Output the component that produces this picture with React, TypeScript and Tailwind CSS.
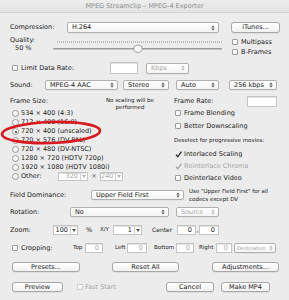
import React from "react";

function Stepper({ color = "#444" }: { color?: string }) {
  return (
    <svg width="4" height="6" viewBox="0 0 4 6" className="shrink-0">
      <path d="M0.3 2.4 L2 0.6 L3.7 2.4 Z" fill={color} />
      <path d="M0.3 3.6 L2 5.4 L3.7 3.6 Z" fill={color} />
    </svg>
  );
}

function Popup({ label, className, disabled = false }: { label: string; className: string; disabled?: boolean }) {
  return (
    <div
      className={`${className} flex shrink-0 items-center justify-between rounded-[2px] border border-[#b0b0b0] bg-gradient-to-b from-white to-[#f4f4f4] pr-[3px] shadow-[0_0.5px_0_rgba(0,0,0,0.08)] ${disabled ? "text-[#a9a9a9]" : "text-[#222]"}`}
    >
      <span className="truncate">{label}</span>
      <Stepper color={disabled ? "#b5b5b5" : "#555"} />
    </div>
  );
}

function Field({ value = "", className, dim = false }: { value?: string; className: string; dim?: boolean }) {
  return (
    <div
      className={`${className} flex shrink-0 items-center justify-end border border-[#c4c4c4] bg-white pr-[3px] shadow-[inset_0_1px_0_#e2e2e2] ${dim ? "text-[#a8a8a8]" : "text-[#222]"}`}
    >
      {value}
    </div>
  );
}

function Combo({ value, className, dim = false }: { value: string; className: string; dim?: boolean }) {
  return (
    <div className={`${className} flex h-[10px] shrink-0 items-stretch border border-[#c4c4c4] bg-white shadow-[inset_0_1px_0_#e2e2e2]`}>
      <div className={`flex flex-1 items-center justify-end pr-[2px] ${dim ? "text-[#a8a8a8]" : "text-[#222]"}`}>{value}</div>
      <div className="flex w-[7px] items-center justify-center border-l border-[#d0d0d0]">
        <svg width="4" height="3" viewBox="0 0 4 3">
          <path d="M0 0 L4 0 L2 3 Z" fill={dim ? "#b0b0b0" : "#555"} />
        </svg>
      </div>
    </div>
  );
}

function Check({ checked = false, disabled = false, className = "" }: { checked?: boolean; disabled?: boolean; className?: string }) {
  if (checked) {
    return (
      <svg width="7" height="7" viewBox="0 0 7 7" className={`${className} shrink-0`}>
        <path d="M1 3.8 L2.8 5.8 L6.4 0.6" fill="none" stroke={disabled ? "#a5a5a5" : "#2a2a2a"} strokeWidth="1.3" />
      </svg>
    );
  }
  return (
    <div
      className={`${className} h-[6px] w-[6px] shrink-0 rounded-[1px] border ${disabled ? "border-[#cfcfcf]" : "border-[#9c9c9c]"} bg-gradient-to-b from-white to-[#f1f1f1]`}
    />
  );
}

function Radio({ checked = false }: { checked?: boolean }) {
  return (
    <div className="ml-[12px] flex h-[7px] w-[7px] shrink-0 items-center justify-center rounded-full border border-[#9a9a9a] bg-gradient-to-b from-white to-[#efefef]">
      {checked ? <div className="h-[2px] w-[2px] rounded-full bg-[#333]" /> : null}
    </div>
  );
}

function Btn({ label, className }: { label: string; className: string }) {
  return (
    <div
      className={`${className} flex h-[10px] shrink-0 items-center justify-center rounded-[3px] border border-[#a8a8a8] bg-gradient-to-b from-white to-[#f1f1f1] text-[#222] shadow-[0_0.5px_0_rgba(0,0,0,0.12)]`}
    >
      {label}
    </div>
  );
}

const sizes = [
  "534 × 400  (4:3)",
  "712 × 400  (16:9)",
  "720 × 400  (unscaled)",
  "720 × 576  (DV-PAL)",
  "720 × 480  (DV-NTSC)",
  "1280 × 720  (HDTV 720p)",
  "1920 × 1080  (HDTV 1080i)",
];

export default function App() {
  return (
    <div className="relative h-[300px] w-[289px] overflow-hidden bg-[#ececec] font-['DejaVu_Sans',sans-serif] text-[6.5px] leading-none text-[#222]">
      {/* title bar */}
      <div className="flex h-[13px] items-center justify-center border-b border-[#d4d4d4] bg-gradient-to-b from-[#eeeeee] to-[#e2e2e2] text-[#8e8e8e]">
        MPEG Streamclip – MPEG-4 Exporter
      </div>

      {/* compression */}
      <div className="mt-[9px] flex h-[11px] items-center">
        <span className="ml-[10px] w-[57px] shrink-0">Compression:</span>
        <Popup label="H.264" className="h-[11px] w-[152px] pl-[4px]" />
        <Btn label="iTunes..." className="ml-[12px] !h-[11px] w-[49px]" />
      </div>

      {/* quality */}
      <div className="mt-[3px] flex h-[21px]">
        <div className="ml-[10px] flex w-[43px] shrink-0 flex-col pt-[1px] leading-[7.5px]">
          <span>Quality:</span>
          <span className="pl-[5px]">50 %</span>
        </div>
        <svg width="169" height="21" viewBox="0 0 169 21" className="shrink-0">
          <line x1="4" y1="6" x2="169" y2="6" stroke="#a0a0a0" strokeWidth="2" strokeDasharray="0.6 1.4" />
          <rect x="0" y="12" width="169" height="1.6" rx="0.8" fill="#9a9a9a" />
          <path d="M81 10.5 Q85 7.5 89 10.5 L89 14.5 Q85 18.5 81 14.5 Z" fill="#fafafa" stroke="#8f8f8f" strokeWidth="0.8" />
        </svg>
        <div className="ml-[10px] flex flex-col pt-[1px]">
          <div className="flex h-[10px] items-center">
            <Check />
            <span className="ml-[3px]">Multipass</span>
          </div>
          <div className="flex h-[10px] items-center">
            <Check />
            <span className="ml-[3px]">B-Frames</span>
          </div>
        </div>
      </div>

      {/* limit data rate */}
      <div className="mt-[5px] flex h-[12px] items-center">
        <Check className="ml-[12px]" />
        <span className="ml-[3px] w-[89px] shrink-0">Limit Data Rate:</span>
        <Field className="h-[12px] w-[28px]" />
        <Popup label="Kbps" disabled className="ml-[8px] h-[11px] w-[43px] pl-[4px]" />
      </div>

      {/* sound */}
      <div className="mt-[6px] flex h-[10px] items-center">
        <span className="ml-[10px] w-[35px] shrink-0">Sound:</span>
        <Popup label="MPEG-4 AAC" className="h-[10px] w-[73px] pl-[4px]" />
        <Popup label="Stereo" className="ml-[5px] h-[10px] w-[46px] pl-[4px]" />
        <Popup label="Auto" className="ml-[7px] h-[10px] w-[43px] pl-[4px]" />
        <Popup label="256 kbps" className="ml-[10px] h-[10px] w-[48px] pl-[4px]" />
      </div>

      {/* frame size / frame rate */}
      <div className="mt-[6px] flex">
        <div className="ml-[10px] flex w-[164px] shrink-0 flex-col">
          <div className="flex h-[9px] items-start">
            <span className="mt-[1.5px] w-[90px] shrink-0">Frame Size:</span>
            <div className="w-[60px] shrink-0 pt-[0.5px] text-center text-[5.5px] leading-[7px]">
              No scaling will be
              <br />
              performed
            </div>
          </div>
          <div className="mt-[4px] flex flex-col">
            {sizes.map((s, i) => (
              <div key={s} className="-ml-[10px] flex h-[9px] items-center">
                <Radio checked={i === 2} />
                <span className="ml-[2px]">{s}</span>
              </div>
            ))}
            <div className="-ml-[10px] flex h-[9px] items-center">
              <Radio />
              <span className="ml-[2px] w-[37px] shrink-0">Other:</span>
              <Combo value="320" dim className="!h-[9px] w-[30px]" />
              <span className="w-[12px] shrink-0 text-center text-[#555]">×</span>
              <Combo value="240" dim className="!h-[9px] w-[23px]" />
            </div>
          </div>
        </div>

        <div className="flex w-[106px] shrink-0 flex-col">
          <div className="flex h-[11px] items-center">
            <span className="w-[73px] shrink-0">Frame Rate:</span>
            <Field className="h-[11px] w-[30px]" />
          </div>
          <div className="mt-[1px] flex h-[10px] items-center">
            <Check className="ml-[1px]" />
            <span className="ml-[3px]">Frame Blending</span>
          </div>
          <div className="mt-[3px] flex h-[10px] items-center">
            <Check className="ml-[1px]" />
            <span className="ml-[3px]">Better Downscaling</span>
          </div>
          <div className="mt-[5px] flex h-[10px] items-center text-[5.5px]">Deselect for progressive movies:</div>
          <div className="mt-[3px] flex h-[10px] items-center">
            <Check checked className="ml-[1px]" />
            <span className="ml-[2px]">Interlaced Scaling</span>
          </div>
          <div className="mt-[2px] flex h-[10px] items-center text-[#a5a5a5]">
            <Check checked disabled className="ml-[1px]" />
            <span className="ml-[2px]">Reinterlace Chroma</span>
          </div>
          <div className="mt-[2px] flex h-[10px] items-center">
            <Check className="ml-[1px]" />
            <span className="ml-[3px]">Deinterlace Video</span>
          </div>
        </div>
      </div>

      {/* field dominance */}
      <div className="mt-[6px] flex h-[12px] items-center">
        <span className="ml-[10px] w-[81px] shrink-0">Field Dominance:</span>
        <Popup label="Upper Field First" className="h-[10px] w-[93px] pl-[4px]" />
        <div className="ml-[5px] w-[85px] shrink-0 text-[5.5px] leading-[8px]">
          Use "Upper Field First" for all
          <br />
          codecs except DV
        </div>
      </div>

      {/* rotation */}
      <div className="mt-[6px] flex h-[10px] items-center">
        <span className="ml-[10px] w-[60px] shrink-0">Rotation:</span>
        <Popup label="No" className="h-[10px] w-[99px] pl-[4px]" />
        <Popup label="Source" disabled className="ml-[7px] h-[10px] w-[43px] pl-[4px]" />
      </div>

      {/* zoom */}
      <div className="mt-[8px] flex h-[10px] items-center">
        <span className="ml-[10px] w-[43px] shrink-0">Zoom:</span>
        <Combo value="100" className="w-[25px]" />
        <span className="w-[22px] shrink-0 text-center">%</span>
        <span className="w-[13px] shrink-0 text-[5.5px]">X/Y</span>
        <Combo value="1" className="w-[29px]" />
        <span className="ml-[10px] w-[25px] shrink-0 text-[6px]">Center</span>
        <Field value="0" className="h-[10px] w-[19px]" />
        <span className="w-[3px] shrink-0 text-center">,</span>
        <Field value="0" className="h-[10px] w-[20px]" />
      </div>

      {/* cropping */}
      <div className="mt-[8px] flex h-[10px] items-center">
        <Check className="ml-[12px]" />
        <span className="ml-[3px] w-[52px] shrink-0">Cropping:</span>
        <span className="w-[12px] shrink-0 text-[5.5px]">Top</span>
        <Field value="0" dim className="h-[10px] w-[18px]" />
        <span className="ml-[12px] w-[12px] shrink-0 text-[5.5px]">Left</span>
        <Field value="0" dim className="h-[10px] w-[20px]" />
        <span className="ml-[7px] w-[22px] shrink-0 text-[5.5px]">Bottom</span>
        <Field value="0" dim className="h-[10px] w-[18px]" />
        <span className="ml-[5px] w-[17px] shrink-0 text-[5.5px]">Right</span>
        <Field value="0" dim className="h-[10px] w-[16px]" />
        <Popup label="Destination" disabled className="ml-[2px] h-[10px] w-[42px] pl-[2px] !pr-[2px] text-[5px]" />
      </div>

      {/* buttons */}
      <div className="mt-[9px] flex h-[10px] items-center">
        <Btn label="Presets..." className="ml-[12px] w-[68px]" />
        <Btn label="Reset All" className="ml-[32px] w-[67px]" />
        <Btn label="Adjustments..." className="ml-[33px] w-[67px]" />
      </div>
      <div className="mt-[10px] flex h-[10px] items-center">
        <Btn label="Preview" className="ml-[12px] w-[51px]" />
        <div className="flex w-[103px] shrink-0 items-center text-[#a8a8a8]">
          <Check disabled className="ml-[14px]" />
          <span className="ml-[2px]">Fast Start</span>
        </div>
        <Btn label="Cancel" className="w-[48px]" />
        <Btn label="Make MP4" className="ml-[7px] w-[49px]" />
      </div>

      {/* red annotation ellipse */}
      <svg width="289" height="300" viewBox="0 0 289 300" className="pointer-events-none absolute left-0 top-0">
        <ellipse cx="51" cy="132.5" rx="49" ry="10.5" fill="none" stroke="#d8191f" strokeWidth="2.6" transform="rotate(-2 51 132.5)" />
      </svg>
    </div>
  );
}
